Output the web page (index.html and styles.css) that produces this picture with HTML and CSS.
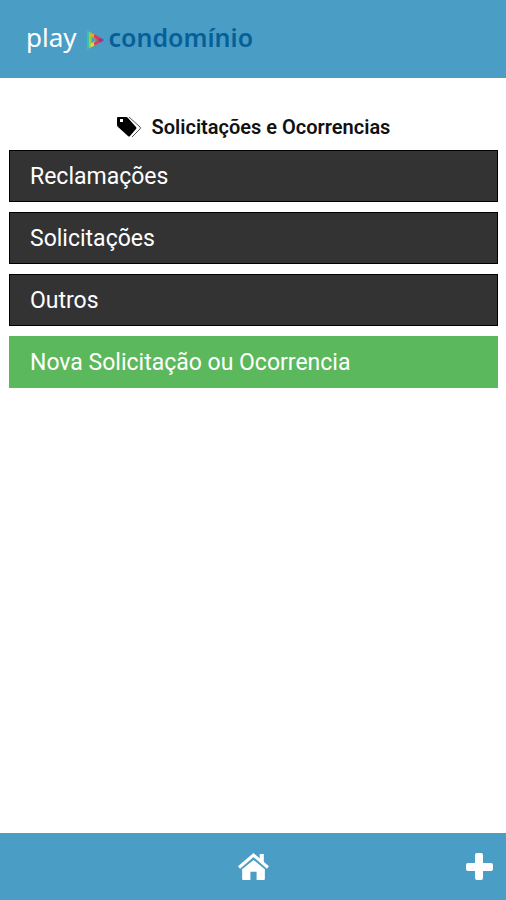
FILE: index.html
```html
<!DOCTYPE html>
<html lang="pt-br">
<head>
    <meta charset="UTF-8">
    <meta name="viewport" content="width=device-width, initial-scale=1">
    <title>Play Condomínio</title>
    <link rel="stylesheet" href="styles.css">
</head>
<body>
    <header class="topo">
        <a href="#" class="logo">
            <span class="logo-play">play</span>
            <svg class="logo-icone" viewBox="0 0 18 20" aria-hidden="true">
                <path d="M0 0L4 2V18L0 20Z" fill="#35c4a5"/>
                <path d="M2 1L5 3V17L2 19Z" fill="#9bcb4d"/>
                <path d="M4 2L11 6L8 9L4 6Z" fill="#f0a02c"/>
                <path d="M8 4L18 10L14 12L7 7Z" fill="#dd3b48"/>
                <path d="M4 18L11 14L8 11L4 14Z" fill="#f3d13a"/>
                <path d="M8 16L18 10L13 9L7 13Z" fill="#d8405a"/>
                <path d="M14 8L18 10L14 13L12 10Z" fill="#8a3f92"/>
                <path d="M5 7L10 10L5 13Z" fill="#4a9ec5"/>
            </svg>
            <span class="logo-nome">condomínio</span>
        </a>
    </header>
    <main class="conteudo">
        <h1 class="titulo">
            <svg class="titulo-icone" viewBox="0 0 25 21" aria-hidden="true">
                <path fill-rule="evenodd" d="M1 0H9Q10 0 11 1L19 10Q20 11 19 12L13 19Q12 20 11 19L1 10Q0 9 0 8V1Q0 0 1 0ZM3 2V5H6V2Z" fill="#000"/>
                <path d="M12 0L23 10Q24 11 23 12L15 20" fill="none" stroke="#555" stroke-width="1"/>
            </svg>
            Solicitações e Ocorrencias
        </h1>
        <div class="lista">
            <button type="button" class="botao">Reclamações</button>
            <button type="button" class="botao">Solicitações</button>
            <button type="button" class="botao">Outros</button>
            <button type="button" class="botao botao-novo">Nova Solicitação ou Ocorrencia</button>
        </div>
    </main>
    <nav class="rodape">
        <a href="#" class="inicio" aria-label="Início">
            <svg class="icone-casa" viewBox="0 0 30 26" aria-hidden="true">
                <path d="M15 6L26 15V25Q26 26 25 26H18V18H12V26H5Q4 26 4 25V15Z" fill="#fff"/>
                <path d="M1 14L15 2L29 14" fill="none" stroke="#fff" stroke-width="3"/>
                <path d="M15 6L4 15M15 6L26 15" stroke="#4a9ec5" stroke-width="1"/>
                <path d="M21 1H25V10L21 7Z" fill="#fff"/>
            </svg>
        </a>
        <button type="button" class="adicionar" aria-label="Adicionar">
            <svg class="icone-mais" viewBox="0 0 28 28" aria-hidden="true">
                <path d="M12 0H16Q18 0 18 2V10H26Q28 10 28 12V16Q28 18 26 18H18V25Q18 27 16 27H12Q10 27 10 25V18H3Q1 18 1 16V12Q1 10 3 10H10V2Q10 0 12 0Z" fill="#fff"/>
            </svg>
        </button>
    </nav>
</body>
</html>
```

FILE: styles.css
```css
* {
    margin: 0;
    padding: 0;
    box-sizing: border-box;
}
body {
    font-family: Roboto, sans-serif;
    background-color: #fff;
    display: flex;
    flex-direction: column;
    min-height: 100vh;
}
.topo {
    background-color: #4a9ec5;
    height: 78px;
    padding: 0 26px;
    display: flex;
    align-items: center;
}
.logo {
    display: flex;
    align-items: center;
    font-family: "Noto Sans", sans-serif;
    font-size: 26px;
    line-height: 36px;
    padding-bottom: 4px;
    text-decoration: none;
}
.logo-play {
    color: #fff;
}
.logo-icone {
    width: 17px;
    height: 20px;
    margin: 6px 5px 0 10px;
}
.logo-nome {
    color: #075e99;
    font-size: 25px;
    font-weight: 600;
}
.conteudo {
    flex: 1;
    padding: 34px 10px 0 9px;
    padding-right: 8px;
}
.titulo {
    display: flex;
    justify-content: center;
    align-items: center;
    gap: 10px;
    font-size: 20px;
    font-weight: 600;
    line-height: 30px;
    color: #111;
    margin-bottom: 8px;
}
.titulo-icone {
    width: 25px;
    height: 21px;
}
.lista {
    display: flex;
    flex-direction: column;
    gap: 10px;
}
.botao {
    width: 100%;
    height: 52px;
    padding: 0 20px;
    border: 1px solid #000;
    background-color: #333;
    color: #fff;
    font-family: Roboto, sans-serif;
    font-size: 23px;
    text-align: left;
    cursor: pointer;
}
.botao-novo {
    background-color: #5cb85c;
    border-color: #5cb85c;
}
.rodape {
    background-color: #4a9ec5;
    height: 67px;
    padding: 0 13px;
    display: grid;
    grid-template-columns: 1fr auto 1fr;
    align-items: center;
}
.inicio {
    grid-column: 2;
    display: flex;
}
.icone-casa {
    width: 31px;
    height: 27px;
}
.adicionar {
    justify-self: end;
    display: flex;
    border: none;
    background: none;
    cursor: pointer;
}
.icone-mais {
    width: 28px;
    height: 28px;
}
```
